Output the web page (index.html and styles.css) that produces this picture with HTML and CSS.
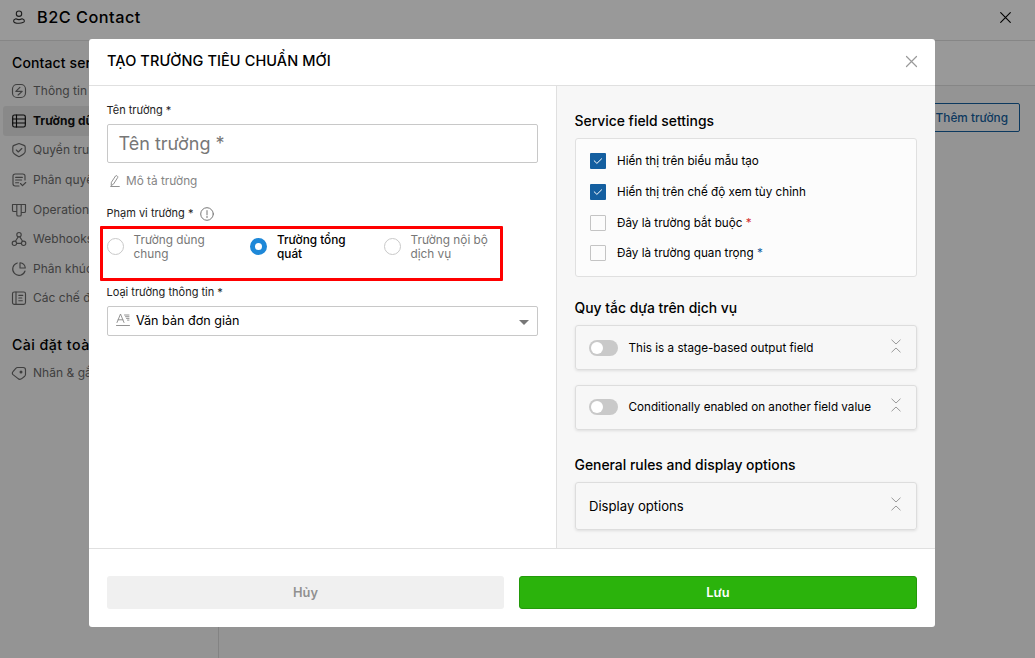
FILE: index.html
```html
<!DOCTYPE html>
<html lang="vi">
<head>
<meta charset="utf-8">
<title>B2C Contact</title>
<link rel="stylesheet" href="styles.css">
</head>
<body>
<div class="app">
  <header class="topbar">
    <svg class="topbar-user" viewBox="0 0 14 14"><circle cx="7" cy="3.700" r="2.700"/><path d="M3.900 8.700C2.400 9.100 1.600 9.800 1.600 10.900c0 1.500 2.400 2.300 5.400 2.300s5.400-.8 5.400-2.300c0-1.100-.8-1.800-2.300-2.200-1.600.9-4.600.9-6.200 0z"/></svg>
    <h1 class="topbar-title">B2C Contact</h1>
    <svg class="topbar-close" viewBox="0 0 11 11"><path d="M.7.7l9.600 9.600M10.300.7L.7 10.300"/></svg>
  </header>
  <div class="workspace">
    <nav class="sidebar">
      <h2 class="side-title">Contact service</h2>
      <a class="side-item"><svg viewBox="0 0 16 16"><rect x="1.500" y="1.500" width="13" height="13" rx="4.500"/><path d="M8.900 4.300L4.800 8.400h6.400L7.100 12"/></svg><span>Thông tin chung</span></a>
      <a class="side-item active"><svg viewBox="0 0 16 16"><rect x="1.700" y="2" width="12.600" height="12" rx="1.800"/><path d="M5.500 2v12M1.700 6h12.600M1.700 10h12.600"/></svg><span>Trường dữ liệu</span></a>
      <a class="side-item"><svg viewBox="0 0 16 16"><path d="M8 1.500l5 1.900c.8.300 1.200.800 1.200 1.600v4.500c0 2-1.400 2.900-6.200 5.200-4.800-2.300-6.200-3.200-6.200-5.200V5c0-.800.400-1.300 1.200-1.600z"/><path d="M5.300 8l2 2 3.500-3.500"/></svg><span>Quyền truy cập</span></a>
      <a class="side-item"><svg viewBox="0 0 16 16"><path d="M14 8V4.200C14 2.700 13.300 2 11.800 2H4.200C2.700 2 2 2.700 2 4.200v7.600C2 13.300 2.700 14 4.200 14H8M4.600 5.300h6.800M4.600 8h6M4.600 10.700h3M9.500 11.500l2 2.200 3.200-3.200"/></svg><span>Phân quyền</span></a>
      <a class="side-item"><svg viewBox="0 0 16 16"><path d="M1.500 2.500h13v6.700c0 .9-.5 1.300-1.300 1.300h-3V2.500M10.200 10.500v2.200c0 .9-.4 1.300-1.300 1.300H7.100c-.9 0-1.300-.4-1.300-1.300V2.500M5.800 9.500H2.800c-.8 0-1.300-.4-1.300-1.300V2.500"/></svg><span>Operations</span></a>
      <a class="side-item"><svg viewBox="0 0 16 16"><circle cx="8" cy="3.700" r="2.200"/><circle cx="3.400" cy="12.300" r="2.200"/><circle cx="12.600" cy="12.300" r="2.200"/><path d="M7.200 5.900L4.400 10.200M8.800 5.900l2.800 4.300M5.700 12.300h4.600"/></svg><span>Webhooks</span></a>
      <a class="side-item"><svg viewBox="0 0 16 16"><path d="M6.300 2A6.300 6.300 0 1 0 14 10M9 1.800V7h5.300C14 4.200 12 2.200 9 1.800z"/></svg><span>Phân khúc</span></a>
      <a class="side-item"><svg viewBox="0 0 16 16"><rect x="1.500" y="2" width="13" height="12.300" rx="1.800"/><path d="M5 2v12.300M7.800 5.300h4M7.800 8h3M7.800 10.700h3.500"/></svg><span>Các chế độ xem</span></a>
      <h2 class="side-title second">Cài đặt toàn cục</h2>
      <a class="side-item"><svg viewBox="0 0 16 16"><path d="M6.500 2.500h5.700c1.500 0 2.300.8 2.300 2.200v4.800c0 .7-.3 1.200-.8 1.700l-2.600 2.200c-1.500 1.300-3 1.300-4.300 0L2 9.600c-.9-1-.9-1.900 0-2.900l2.800-3.400c.5-.5 1-.8 1.700-.8z"/><circle class="dot" cx="10" cy="7" r="1.500"/></svg><span>Nhãn &amp; gắn thẻ</span></a>
    </nav>
    <main class="main">
      <div class="main-head"></div>
      <div class="main-body"><button class="add-field">Thêm trường</button></div>
    </main>
  </div>
</div>
<div class="overlay">
  <section class="dialog">
    <header class="dialog-head">
      <h2>TẠO TRƯỜNG TIÊU CHUẨN MỚI</h2>
      <svg class="dialog-close" viewBox="0 0 13 13"><path d="M1.500 1.500l10 10M11.500 1.500l-10 10"/></svg>
    </header>
    <div class="dialog-body">
      <div class="form">
        <div class="label name-label"><span>Tên trường *</span></div>
        <div class="name-input"><span>Tên trường *</span></div>
        <div class="describe"><svg viewBox="0 0 12 14"><path d="M2.200 11.200L2.400 8.300 6.500 2c.7-1 2.800.2 2.200 1.500L4.700 9.800zM1.700 12.500h8.600"/></svg><span>Mô tả trường</span></div>
        <div class="label scope-label"><span>Phạm vi trường *</span><svg viewBox="0 0 14 14"><circle cx="7" cy="7" r="6.300"/><path d="M7 3.600v4.200M7 9.300v1.300"/></svg></div>
        <div class="radios">
          <div class="radio"><i></i><span>Trường dùng<br>chung</span></div>
          <div class="radio on"><i></i><span>Trường tổng<br>quát</span></div>
          <div class="radio"><i></i><span>Trường nội bộ<br>dịch vụ</span></div>
        </div>
        <div class="label type-label"><span>Loại trường thông tin *</span></div>
        <div class="select"><svg class="type-icon" viewBox="0 0 14 14"><path d="M1 9.500L4.500 1l3.500 8.500M2.200 6.800h4.600M8.500 2H13M9.500 3.700H13M10.500 5.400H13M11.500 7.100H13M.5 12.500h13"/></svg><span>Văn bản đơn giản</span><b class="caret"></b></div>
        <div class="highlight"></div>
      </div>
      <aside class="settings">
        <h3>Service field settings</h3>
        <div class="checks">
          <div class="check on"><i><svg viewBox="0 0 16 16"><path d="M4.200 7.800l2.700 2.600 4.700-4.600"/></svg></i><span>Hiển thị trên biểu mẫu tạo</span></div>
          <div class="check on"><i><svg viewBox="0 0 16 16"><path d="M4.200 7.800l2.700 2.600 4.700-4.600"/></svg></i><span>Hiển thị trên chế độ xem tùy chỉnh</span></div>
          <div class="check"><i></i><span>Đây là trường bắt buộc <em class="red">*</em></span></div>
          <div class="check"><i></i><span>Đây là trường quan trọng <em class="blue">*</em></span></div>
        </div>
        <h3 class="rules-title">Quy tắc dựa trên dịch vụ</h3>
        <div class="panel"><i class="toggle"></i><span>This is a stage-based output field</span><svg viewBox="0 0 10 14"><path d="M.8 1L5 5l4.200-4M.8 13L5 9l4.200 4"/></svg></div>
        <div class="panel conditional"><i class="toggle"></i><span>Conditionally enabled on another field value</span><svg viewBox="0 0 10 14"><path d="M.8 1L5 5l4.200-4M.8 13L5 9l4.200 4"/></svg></div>
        <h3 class="general-title">General rules and display options</h3>
        <div class="panel display"><span>Display options</span><svg viewBox="0 0 10 14"><path d="M.8 1L5 5l4.200-4M.8 13L5 9l4.200 4"/></svg></div>
      </aside>
    </div>
    <footer class="dialog-foot">
      <button class="cancel">Hủy</button>
      <button class="save">Lưu</button>
    </footer>
  </section>
</div>
</body>
</html>
```

FILE: styles.css
```css
* { box-sizing: border-box; }
body { margin: 0; width: 1035px; height: 658px; overflow: hidden; font: 12px/16px Inter, "Noto Sans", sans-serif; color: #000; }
h1, h2, h3 { margin: 0; font-weight: 500; white-space: nowrap; }
svg { flex: none; fill: none; stroke: currentColor; stroke-width: 1.2; stroke-linecap: round; stroke-linejoin: round; }
span { white-space: nowrap; }
button { font: inherit; padding: 0; }
i, em { font-style: normal; }

.app { height: 658px; display: flex; flex-direction: column; background: #f7f7f7; }
.topbar { height: 41px; display: flex; align-items: center; padding: 0 24px 6px 12px; background: #fff; border-bottom: 1px solid #e0e0e0; }
.topbar-user { width: 14px; height: 14px; color: #333; stroke-width: 1.100; }
.topbar-title { margin-left: 11px; font-size: 16.300px; line-height: 20px; letter-spacing: .5px; }
.topbar-close { width: 11px; height: 11px; margin-left: auto; stroke-width: 1.100; }
.workspace { flex: 1; display: flex; }
.sidebar { width: 219px; border-right: 1px solid #dadada; padding: 12px 3px 0; }
.side-title { height: 20px; padding-left: 9px; font-size: 14px; line-height: 20px; letter-spacing: .12px; margin-bottom: 3.500px; }
.side-title.second { margin-top: 22px; margin-bottom: 3px; font-size: 14.200px; letter-spacing: .45px; }
.side-item { height: 29.600px; display: flex; align-items: center; gap: 6px; padding-left: 8px; color: #6a6a6a; font-size: 12px; letter-spacing: .03px; border-radius: 3px; }
.side-item svg { width: 16px; height: 16px; stroke-width: 1.150; }
.side-item.active { color: #111; font-weight: 700; background: #e5e5e5; }
.side-item .dot { fill: currentColor; stroke: none; }
.main { flex: 1; display: flex; flex-direction: column; }
.main-head { height: 45px; background: #fff; border-bottom: 1px solid #e0e0e0; }
.main-body { display: flex; justify-content: flex-end; padding: 17px 15px 0; }
.add-field { width: 120px; height: 29px; padding-right: 11px; text-align: right; background: transparent; border: 1px solid #155f9e; border-radius: 2px; color: #155f9e; font-weight: 500; font-size: 11.800px; }

.overlay { position: absolute; inset: 0; width: 1035px; height: 658px; padding: 39px 100px 31px 89px; background: rgba(0, 0, 0, .4); }
.dialog { height: 588px; display: flex; flex-direction: column; background: #fff; border-radius: 3px; overflow: hidden; }
.dialog-head { height: 47px; display: flex; align-items: center; justify-content: space-between; padding: 0 17px 3px 18px; border-bottom: 1px solid #e0e0e0; }
.dialog-head h2 { font-size: 14.500px; line-height: 20px; letter-spacing: .1px; }
.dialog-close { width: 13px; height: 13px; margin-top: 1px; color: #999; }
.dialog-body { height: 463px; display: flex; border-bottom: 1px solid #e0e0e0; }

.form { position: relative; width: 467px; padding: 16px 18px 0 17.500px; }
.label { display: flex; align-items: center; height: 16px; font-size: 11px; color: #222; }
.name-input { height: 39px; margin: 6px 0 0 .5px; padding-left: 10.500px; display: flex; align-items: center; border: 1px solid #c8c8c8; border-radius: 2px; color: #777; font-size: 18px; line-height: 24px; }
.describe { height: 16px; margin-top: 10px; display: flex; align-items: center; padding-left: 2px; gap: 5.500px; color: #858585; font-size: 11.800px; }
.describe svg { width: 12px; height: 14px; stroke-width: .9; }
.scope-label { margin-top: 16px; }
.scope-label svg { width: 14px; height: 14px; margin: 1px 0 0 7px; color: #777; stroke-width: 1; }
.radios { display: flex; margin: 11px 0 0 .5px; height: 28px; }
.radio { display: flex; align-items: center; gap: 9.500px; width: 143px; color: #777; font-size: 11.800px; line-height: 14px; }
.radio span { padding-top: 1px; }
.radio.on { width: 134px; color: #000; font-weight: 500; gap: 10px; }
.radio i { flex: none; width: 17px; height: 17px; border: 1px solid #c8c8c8; border-radius: 50%; }
.radio.on i { border: 5px solid #1e88d8; }
.type-label { margin-top: 24px; }
.select { height: 30px; margin: 6px 0 0 .5px; display: flex; align-items: center; padding: 0 8px 1px; border: 1px solid #c8c8c8; border-radius: 2px; font-size: 12.600px; }
.type-icon { width: 14px; height: 14px; margin: 0 6px 2px 0; color: #888; stroke-width: .9; }
.caret { margin: 3px 0 0 auto; border: 5px solid transparent; border-top-color: #777; border-bottom: 0; }
.highlight { position: absolute; left: 11px; top: 140px; width: 403px; height: 55px; border: 3px solid #f00; border-radius: 1px; }

.settings { flex: 1; padding: 25px 18px 0 18px; background: #f7f7f7; border-left: 1px solid #e0e0e0; }
.settings h3 { height: 20px; margin-left: -.5px; font-size: 13.900px; line-height: 20px; }
.checks { height: 139px; margin-top: 7px; padding: 7px 14px 6px; border: 1px solid #e0e0e0; border-radius: 3px; background: #fcfcfc; }
.check { height: 30.700px; display: flex; align-items: center; gap: 11px; font-size: 11.700px; }
.check i { width: 16px; height: 16px; border: 1px solid #c4c4c4; border-radius: 1px; display: flex; }
.check.on i { background: #145fa0; border: 0; }
.check svg { width: 16px; height: 16px; color: #fff; stroke-width: 1; }
.red { color: #d32f2f; }
.blue { color: #145fa0; }
.settings .rules-title { margin-top: 21px; margin-bottom: 7px; }
.panel { height: 45px; margin-bottom: 15px; display: flex; align-items: center; padding: 0 15px 0 13px; border: 1px solid #ddd; border-radius: 3px; box-shadow: 0 1px 3px rgba(0, 0, 0, .1); font-size: 11.700px; }
.panel svg { width: 10px; height: 14px; margin: 0 0 4px auto; color: #999; stroke-width: 1; }
.panel.conditional { padding-bottom: 1px; }
.toggle { width: 29px; height: 16px; margin-right: 10.500px; padding: 2px; border-radius: 8px; background: #c9c9c9; }
.toggle::before { content: ""; display: block; width: 12px; height: 12px; border-radius: 50%; background: #fff; }
.settings .general-title { margin-top: 25px; margin-bottom: 7px; }
.panel.display { height: 48px; font-size: 13.100px; }
.panel.display svg { margin-bottom: 5px; }

.dialog-foot { display: grid; grid-template-columns: 397px 398px; gap: 15px; padding: 27px 18px 0; }
.dialog-foot button { height: 33px; border: 0; border-radius: 3px; font-weight: 600; font-size: 12.800px; }
.cancel { background: #f0f0f0; color: #909090; }
.dialog-foot .save { background: #2bb30c; color: #fff; border: 1px solid #239a0a; }
```
